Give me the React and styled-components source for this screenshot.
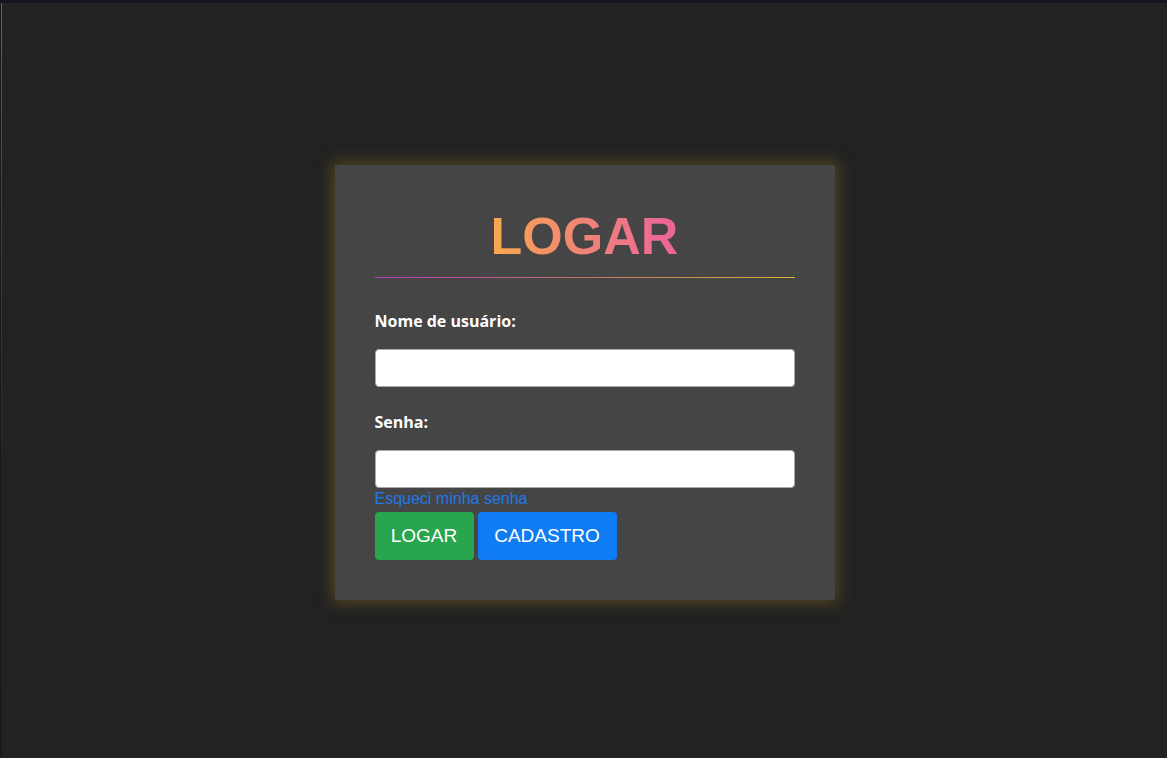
import React from "react";
import styled, { createGlobalStyle } from "styled-components";

const GlobalStyle = createGlobalStyle`
  html, body {
    margin: 0;
    padding: 0;
    height: 100%;
  }
  body {
    background-color: #222222;
    background-image:
      linear-gradient(#16151d, #16151d),
      linear-gradient(#e0245e 0%, #8a1f45 25%, #2a2328 60%, #1a1a1e 100%),
      linear-gradient(#19181d, #19181d);
    background-size: 100% 3px, 1px 100%, 1px 100%;
    background-position: 0 0, 1px 0, 0 0;
    background-repeat: no-repeat;
    font-family: "Liberation Sans", Arial, sans-serif;
  }
  #root {
    min-height: 100%;
  }
`;

function App() {
  return (
    <>
      <GlobalStyle />
      <Page>
        <LoginCard>
          <Title>LOGAR</Title>
          <Divider />
          <Form onSubmit={(e) => e.preventDefault()}>
            <Label htmlFor="usuario">Nome de usuário:</Label>
            <Input id="usuario" type="text" />
            <Label htmlFor="senha" $spaced>
              Senha:
            </Label>
            <Input id="senha" type="password" />
            <ForgotLink href="#">Esqueci minha senha</ForgotLink>
            <BtnRow>
              <Btn type="submit" $variant="success">
                LOGAR
              </Btn>
              <Btn type="button" $variant="primary" $wide>
                CADASTRO
              </Btn>
            </BtnRow>
          </Form>
        </LoginCard>
      </Page>
    </>
  );
}
export default App;

const VARIANT = {
  success: "#28a54f",
  primary: "#0f7cf4",
};

const Page = styled.div`
  height: 758px;
  display: flex;
  justify-content: center;
  align-items: flex-start;
  padding: 165px 0 0 2px;
  box-sizing: border-box;
`;

const LoginCard = styled.div`
  width: 500px;
  box-sizing: border-box;
  padding: 41px 40px 40px;
  background-color: #454545;
  box-shadow: 0 0 14px 3px rgba(120, 100, 30, 0.55);
`;

const Title = styled.h1`
  margin: 0;
  text-align: center;
  font-family: "Liberation Sans", Arial, sans-serif;
  font-size: 52px;
  line-height: 61px;
  font-weight: bold;
  background: linear-gradient(90deg, #f9a84e 0%, #f08378 50%, #ec6498 100%);
  background-size: 186px 100%;
  background-position: center;
  background-repeat: no-repeat;
  -webkit-background-clip: text;
  background-clip: text;
  color: transparent;
`;

const Divider = styled.div`
  margin-top: 10px;
  height: 1px;
  background: linear-gradient(90deg, #b83cbc 0%, #c07466 50%, #dcb236 100%);
`;

const Form = styled.form`
  display: flex;
  flex-direction: column;
  padding-top: 33px;
`;

const Label = styled.label`
  font-family: "Open Sans", "Noto Sans", sans-serif;
  font-weight: bold;
  font-size: 16px;
  line-height: 20px;
  color: #ffffff;
  margin-top: ${(props) => (props.$spaced ? "25px" : "0")};
  margin-bottom: 18px;
`;

const Input = styled.input`
  height: 38px;
  box-sizing: border-box;
  width: 100%;
  border: 1px solid #a9a9a9;
  border-radius: 4px;
  background: #ffffff;
  padding: 0 10px;
  font-size: 15px;
  outline: none;
`;

const ForgotLink = styled.a`
  display: block;
  align-self: flex-start;
  font-family: "Liberation Sans", Arial, sans-serif;
  font-size: 16px;
  line-height: 22px;
  color: #1f78e6;
  text-decoration: none;
`;

const BtnRow = styled.div`
  display: flex;
  gap: 4px;
  margin-top: 2px;
`;

const Btn = styled.button`
  height: 48px;
  width: ${(props) => (props.$wide ? "139px" : "99px")};
  border: none;
  border-radius: 4px;
  background-color: ${(props) => VARIANT[props.$variant]};
  color: #ffffff;
  font-family: "Liberation Sans", Arial, sans-serif;
  font-size: 19px;
  cursor: pointer;
`;
